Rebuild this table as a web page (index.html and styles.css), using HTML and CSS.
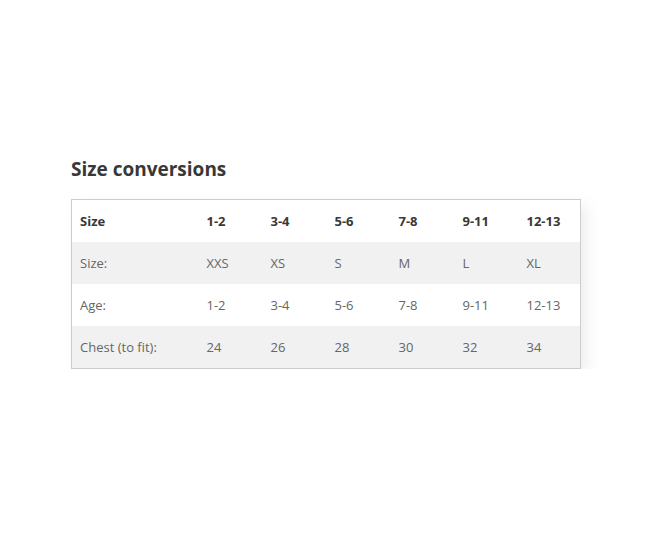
FILE: index.html
```html
<!DOCTYPE html>
<html>
<head>
<meta charset="utf-8">
<link rel="stylesheet" href="styles.css">
</head>
<body>
<div class="wrap">
  <h2 class="title">Size conversions</h2>
  <table class="sizes">
    <colgroup>
      <col class="c-first"><col class="c"><col class="c"><col class="c"><col class="c"><col class="c"><col class="c-last">
    </colgroup>
    <thead>
      <tr><th>Size</th><th>1-2</th><th>3-4</th><th>5-6</th><th>7-8</th><th>9-11</th><th>12-13</th></tr>
    </thead>
    <tbody>
      <tr class="alt"><td>Size:</td><td>XXS</td><td>XS</td><td>S</td><td>M</td><td>L</td><td>XL</td></tr>
      <tr><td>Age:</td><td>1-2</td><td>3-4</td><td>5-6</td><td>7-8</td><td>9-11</td><td>12-13</td></tr>
      <tr class="alt"><td>Chest (to fit):</td><td>24</td><td>26</td><td>28</td><td>30</td><td>32</td><td>34</td></tr>
    </tbody>
  </table>
</div>
</body>
</html>
```
FILE: styles.css
```css
html, body {
  margin: 0;
  padding: 0;
  background: #fff;
}
body {
  font-family: "Open Sans", "Liberation Sans", sans-serif;
  color: #666;
}
.wrap {
  padding: 156px 0 0 71px;
}
.title {
  margin: 0 0 16px 0;
  font-size: 19px;
  line-height: 27px;
  font-weight: 700;
  color: #383838;
}
.sizes {
  border-collapse: collapse;
  width: 509px;
  table-layout: fixed;
  border: 1px solid #ccc;
  box-shadow: 6px 6px 14px rgba(0, 0, 0, 0.07);
  font-size: 13px;
}
.c-first { width: 127px; }
.c { width: 64px; }
.c-last { width: 62px; }
.sizes th, .sizes td {
  text-align: left;
  padding: 0 0 0 8px;
  height: 42px;
}
.sizes th {
  font-weight: 700;
  color: #383838;
}
.sizes tr.alt td {
  background: #f1f1f1;
}
```
